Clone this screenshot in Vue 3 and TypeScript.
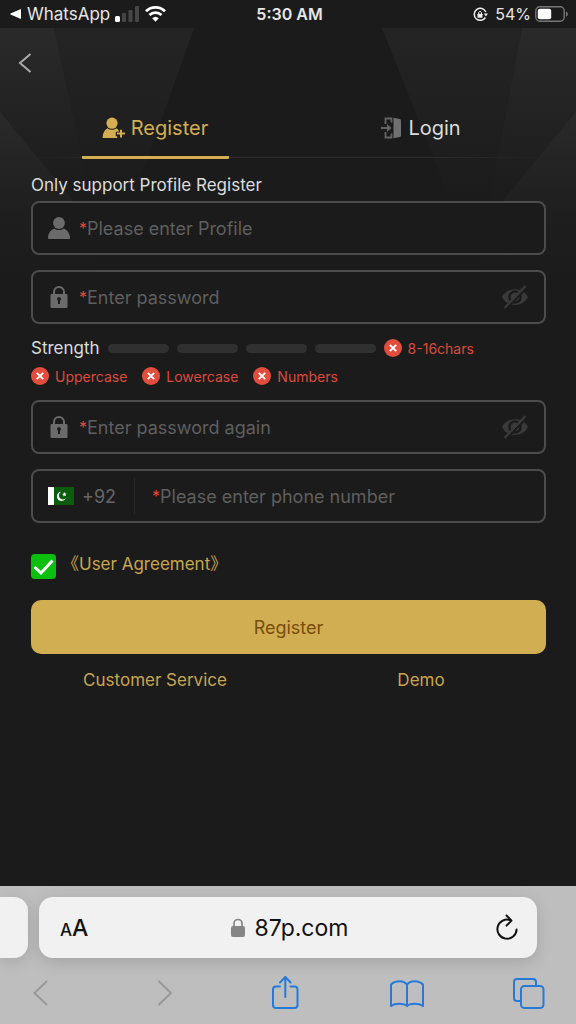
<script setup lang="ts">
import { ref } from 'vue'

interface Rule { id: string; label: string }

const profile = ref('')
const password = ref('')
const passwordAgain = ref('')
const phone = ref('')
const agreed = ref(true)
const showPassword = ref(false)
const showAgain = ref(false)

const lengthRule: Rule = { id: 'length', label: '8-16chars' }
const rules: Rule[] = [
  { id: 'upper', label: 'Uppercase' },
  { id: 'lower', label: 'Lowercase' },
  { id: 'number', label: 'Numbers' },
]
</script>

<template>
  <div class="screen">
    <header class="status">
      <div class="status-left">
        <svg width="12" height="12" viewBox="0 0 12 12"><path d="M11 1v10L.5 6.500v-1z" fill="#fff" /></svg>
        <span class="carrier">WhatsApp</span>
        <svg class="signal" width="25" height="16" viewBox="0 0 25 16">
          <rect x="0" y="10" width="5" height="6" rx="1.500" fill="#fff" />
          <rect x="7" y="7" width="4" height="9" rx="1" fill="#464646" />
          <rect x="13.500" y="4" width="4" height="12" rx="1" fill="#464646" />
          <rect x="20" y="0" width="4" height="16" rx="1" fill="#464646" />
        </svg>
        <svg width="21" height="16" viewBox="0 0 21 16" fill="none" stroke="#fff" stroke-width="2.800">
          <path d="M1 5.300a13.600 13.600 0 0 1 19 0" />
          <path d="M4.500 9a8.600 8.600 0 0 1 12 0" />
          <path d="M10.500 15.800 7.200 12.200a4.800 4.800 0 0 1 6.600 0z" fill="#fff" stroke="none" />
        </svg>
      </div>
      <span class="clock">5:30 AM</span>
      <div class="status-right">
        <svg width="15" height="15" viewBox="0 0 15 15">
          <path d="M12.800 5A6 6 0 1 0 12.400 10.500" fill="none" stroke="#eee" stroke-width="1.500" />
          <path d="M10.800 6.500H15l-2.100 3z" fill="#eee" />
          <rect x="4.500" y="6.700" width="5" height="4" rx=".6" fill="#eee" />
          <path d="M5.600 7V5.600a1.500 1.500 0 0 1 2.900 0V7" fill="none" stroke="#eee" stroke-width="1" />
        </svg>
        <span class="percent">54%</span>
        <svg width="34" height="16" viewBox="0 0 34 16">
          <rect x=".8" y=".8" width="28.400" height="14.400" rx="4" fill="none" stroke="#777" stroke-width="1.400" />
          <rect x="2.800" y="2.800" width="13.400" height="10.400" rx="2" fill="#fff" />
          <path d="M31 5.400c2.400.8 2.400 4.400 0 5.200z" fill="#777" />
        </svg>
      </div>
    </header>

    <main class="page">
      <svg class="backdrop" viewBox="0 0 576 280" preserveAspectRatio="none" aria-hidden="true">
        <defs>
          <linearGradient id="side" x1="0" y1="0" x2="0" y2="1">
            <stop offset="0" stop-color="#2a2a2a" /><stop offset="1" stop-color="#1b1b1b" />
          </linearGradient>
          <linearGradient id="beam" x1="0" y1="0" x2="0" y2="1">
            <stop offset="0" stop-color="#242424" /><stop offset="1" stop-color="#1b1b1b" />
          </linearGradient>
          <linearGradient id="low" x1="0" y1="0" x2="0" y2="1">
            <stop offset="0" stop-color="#2a2a2a" /><stop offset=".6" stop-color="#1e1e1e" /><stop offset="1" stop-color="#1b1b1b" />
          </linearGradient>
        </defs>
        <path d="M54 0h140l-64 180H90z" fill="url(#beam)" />
        <path d="M0 0h54l36 170H0z" fill="url(#side)" />
        <path d="M0 84l96 116v60H0z" fill="url(#low)" />
        <path d="M382 0h140l-34 180h-34z" fill="url(#beam)" />
        <path d="M522 0h54v180h-88z" fill="url(#side)" />
        <path d="M576 84l-96 116v60h96z" fill="url(#low)" />
      </svg>

      <div class="content">
        <nav class="top">
          <button class="back" type="button" aria-label="Back">
            <svg width="14" height="20" viewBox="0 0 14 20" fill="none" stroke="#aaa" stroke-width="2"><path d="M12.500 1 2 10l10.500 9" /></svg>
          </button>
        </nav>

        <div class="tabs">
          <button class="tab active" type="button">
            <svg width="23" height="22" viewBox="0 0 23 22" fill="#d3ae52">
              <circle cx="10" cy="6.200" r="5.600" />
              <path d="M5.500 11.300c2.800 2 6.200 2 9 0 1 .5 1.700 1.200 2.200 2v1.400h-2.900v4.600h1.400V21H1.500C.8 21 .5 20.600.6 20 .9 16 2.500 13 5.500 11.300z" />
              <path d="M18 12.700h2v2.900h3v2h-3v2.900h-2v-2.900h-3v-2h3z" />
            </svg>
            <span>Register</span>
          </button>
          <button class="tab" type="button">
            <svg width="21" height="22" viewBox="0 0 21 22">
              <path d="M10.500 5.500v-4h-6v5.500M4.500 15v5.500h6v-4" fill="none" stroke="#646464" stroke-width="1.800" />
              <path d="M0 10.100h6V7l4.500 4L6 15v-3.100H0z" fill="#646464" />
              <path d="M12.500.8 18.600 2q1.400.3 1.400 1.600v14.800q0 1.300-1.400 1.600l-6.100 1.200z" fill="#707070" />
            </svg>
            <span>Login</span>
          </button>
        </div>

        <form class="form" @submit.prevent>
          <label class="caption" for="profile">Only support Profile Register</label>
          <div class="field">
            <label class="lead" for="profile">
              <svg class="glyph" width="22" height="22" viewBox="0 0 22 22" fill="#6b6b6b">
                <circle cx="11" cy="6" r="5.900" />
                <path d="M6.200 11.500c3 2 6.600 2 9.600 0 3.700 1.500 6.100 5.500 6.200 9 0 1-.4 1.500-1.300 1.500H1.300C.4 22 0 21.500 0 20.500c.1-3.500 2.500-7.500 6.200-9z" />
              </svg>
              <span class="star">*</span>
            </label>
            <input id="profile" v-model="profile" type="text" placeholder="Please enter Profile" />
          </div>

          <div class="field">
            <label class="lead" for="password" aria-label="Password">
              <svg class="glyph" width="22" height="22" viewBox="0 0 22 22">
                <path d="M6 10V6a5 5 0 0 1 10 0v4" fill="none" stroke="#6b6b6b" stroke-width="2" />
                <path fill-rule="evenodd" d="M3.500 8h15q1 0 1 1v12q0 1-1 1h-15q-1 0-1-1V9q0-1 1-1zM11 11a2 2 0 0 0-1 3.700V18h2v-3.300A2 2 0 0 0 11 11z" fill="#6b6b6b" />
              </svg>
              <span class="star">*</span>
            </label>
            <input id="password" v-model="password" :type="showPassword ? 'text' : 'password'" placeholder="Enter password" />
            <button class="eye" type="button" aria-label="Show password" @click="showPassword = !showPassword">
              <svg width="28" height="24" viewBox="0 0 28 24">
                <path d="M1 12C6 1.500 22 1.500 27 12 22 22.500 6 22.500 1 12z" fill="#3a3a3a" />
                <circle cx="14" cy="12" r="5.600" fill="none" stroke="#1b1b1b" stroke-width="2.400" />
                <path d="M5.500 23.500 26 2.500" stroke="#1b1b1b" stroke-width="2.400" />
                <path d="M3.500 23 24.500 1" stroke="#3a3a3a" stroke-width="2.200" />
              </svg>
            </button>
          </div>

          <div class="strength">
            <span class="strength-title">Strength</span>
            <span v-for="n in 4" :key="n" class="bar"></span>
            <span class="rule">
              <svg width="18" height="18" viewBox="0 0 18 18"><circle cx="9" cy="9" r="9" fill="#e34d3e" /><path d="m5.800 5.800 6.400 6.400m0-6.400-6.400 6.400" stroke="#fff" stroke-width="1.900" /></svg>
              {{ lengthRule.label }}
            </span>
          </div>
          <div class="rules">
            <span v-for="rule in rules" :key="rule.id" class="rule">
              <svg width="18" height="18" viewBox="0 0 18 18"><circle cx="9" cy="9" r="9" fill="#e34d3e" /><path d="m5.800 5.800 6.400 6.400m0-6.400-6.400 6.400" stroke="#fff" stroke-width="1.900" /></svg>
              {{ rule.label }}
            </span>
          </div>

          <div class="field">
            <label class="lead" for="again" aria-label="Repeat password">
              <svg class="glyph" width="22" height="22" viewBox="0 0 22 22">
                <path d="M6 10V6a5 5 0 0 1 10 0v4" fill="none" stroke="#6b6b6b" stroke-width="2" />
                <path fill-rule="evenodd" d="M3.500 8h15q1 0 1 1v12q0 1-1 1h-15q-1 0-1-1V9q0-1 1-1zM11 11a2 2 0 0 0-1 3.700V18h2v-3.300A2 2 0 0 0 11 11z" fill="#6b6b6b" />
              </svg>
              <span class="star">*</span>
            </label>
            <input id="again" v-model="passwordAgain" :type="showAgain ? 'text' : 'password'" placeholder="Enter password again" />
            <button class="eye" type="button" aria-label="Show repeated password" @click="showAgain = !showAgain">
              <svg width="28" height="24" viewBox="0 0 28 24">
                <path d="M1 12C6 1.500 22 1.500 27 12 22 22.500 6 22.500 1 12z" fill="#3a3a3a" />
                <circle cx="14" cy="12" r="5.600" fill="none" stroke="#1b1b1b" stroke-width="2.400" />
                <path d="M5.500 23.500 26 2.500" stroke="#1b1b1b" stroke-width="2.400" />
                <path d="M3.500 23 24.500 1" stroke="#3a3a3a" stroke-width="2.200" />
              </svg>
            </button>
          </div>

          <div class="field">
            <button class="country" type="button">
              <svg width="26" height="18" viewBox="0 0 26 18">
                <rect width="26" height="18" fill="#0b5c0d" />
                <rect width="6" height="18" fill="#fff" />
                <path d="M13.300 4.800a4.600 4.600 0 1 0 4.600 6.300 4 4 0 1 1-4.600-6.300z" fill="#fff" />
                <path d="m16.300 5 .7 1.400 1.500-.1-1 1.200.6 1.400-1.500-.5-1.200 1 .1-1.500-1.300-.8 1.500-.5z" fill="#fff" />
              </svg>
              <span>+92</span>
            </button>
            <label class="star" for="phone" aria-label="Phone number">*</label>
            <input id="phone" v-model="phone" type="tel" placeholder="Please enter phone number" />
          </div>

          <div class="agreement">
            <input id="agree" v-model="agreed" class="tick" type="checkbox" aria-label="Agree" />
            <label for="agree" class="agree-label"><a href="#agreement">《User Agreement》</a></label>
          </div>

          <button class="submit" type="submit">Register</button>
        </form>

        <div class="links">
          <a href="#service">Customer Service</a>
          <a href="#demo">Demo</a>
        </div>
      </div>
    </main>

    <footer class="browser">
      <div class="address-row">
        <div class="neighbour"></div>
        <div class="address">
          <button class="aa" type="button" aria-label="Page settings"><span class="aa-small">A</span><span class="aa-big">A</span></button>
          <div class="url">
            <svg width="14" height="20" viewBox="0 0 14 20">
              <rect x="0" y="8" width="14" height="11" rx="2" fill="#858585" />
              <path d="M3 9V5.500a4 4 0 0 1 8 0V9" fill="none" stroke="#858585" stroke-width="1.700" />
            </svg>
            <span>87p.com</span>
          </div>
          <button class="reload" type="button" aria-label="Reload">
            <svg width="24" height="28" viewBox="0 0 24 28" fill="none" stroke="#111" stroke-width="2" stroke-linecap="round" stroke-linejoin="round">
              <path d="M15.500 6.200A9.600 9.600 0 1 0 21.600 15.500" /><path d="m11.500 1.500 5 5.100-5 5" />
            </svg>
          </button>
        </div>
      </div>
      <nav class="tools">
        <button type="button" aria-label="Previous page"><svg width="36" height="36" viewBox="0 0 36 36" fill="none" stroke="#999" stroke-width="2"><path d="M25 6 12.500 18 25 30" /></svg></button>
        <button type="button" aria-label="Next page"><svg width="36" height="36" viewBox="0 0 36 36" fill="none" stroke="#999" stroke-width="2"><path d="m14.500 6 12.500 12L14.500 30" /></svg></button>
        <button type="button" aria-label="Share"><svg width="36" height="36" viewBox="0 0 36 36" fill="none" stroke="#267bd8" stroke-width="2" stroke-linecap="round" stroke-linejoin="round"><path d="M14 11.500h-4q-3 0-3 3V30q0 3 3 3h18.500q3 0 3-3V14.500q0-3-3-3h-4M19.300 22V2M14 7.500 19.300 2l5.300 5.500" /></svg></button>
        <button type="button" aria-label="Bookmarks"><svg width="36" height="36" viewBox="0 0 36 36" fill="none" stroke="#267bd8" stroke-width="2" stroke-linejoin="round"><path d="M19 9.500c-3-4.500-12-4.500-16 0v21.500c4-3 13-3 16 0zM19 9.500c3-4.500 12-4.500 16 0v21.500c-4-3-13-3-16 0z" /></svg></button>
        <button type="button" aria-label="Tabs"><svg width="36" height="36" viewBox="0 0 36 36" fill="none" stroke="#267bd8" stroke-width="2"><path d="M11 26H7q-3 0-3-3V7q0-3 3-3h16q3 0 3 3v3.500" /><rect x="11" y="11" width="22.500" height="22" rx="3.500" /></svg></button>
      </nav>
    </footer>
  </div>
</template>

<style>
body { margin: 0; background: #1b1b1b; }
</style>

<style scoped>
.screen {
  display: flex;
  flex-direction: column;
  min-height: 100vh;
  background: #1b1b1b;
  color: #dcdcdc;
  font-family: Inter, "Liberation Sans", "Noto Sans CJK SC", sans-serif;
  font-size: 17px;
}
button {
  border: 0;
  padding: 0;
  background: none;
  color: inherit;
  font: inherit;
  cursor: pointer;
}
svg { display: block; flex: none; }
a { text-decoration: none; color: inherit; }

.status {
  display: grid;
  grid-template-columns: 1fr auto 1fr;
  align-items: center;
  height: 28px;
  padding: 0 7px 0 10px;
  color: #e6e6e6;
}
.status-left, .status-right { display: flex; align-items: center; }
.status-right { justify-content: flex-end; }
.carrier { margin: 0 5px; }
.signal { margin-right: 5px; }
.clock { font-size: 16px; font-weight: 600; }
.percent { margin: 0 4px 0 7px; font-size: 16px; }

.page { position: relative; flex: 1; }
.backdrop { position: absolute; top: 0; left: 0; width: 100%; height: 280px; }
.content { position: relative; }

.top { padding: 25px 18px 0; }
.back { display: block; }
.tabs {
  display: grid;
  grid-template-columns: 1fr 1fr;
  margin: 26px 22px 0;
  background: linear-gradient(90deg, transparent, #2b2b2b 20%, #2b2b2b 80%, transparent) bottom 1px left 0 / 100% 1px no-repeat;
}
.tab {
  display: flex;
  justify-content: center;
  justify-self: center;
  align-items: center;
  gap: 6px;
  width: 147px;
  height: 60px;
  border-bottom: 3px solid transparent;
  font-size: 20px;
}
.tab.active { border-bottom-color: #d3ae52; border-radius: 1px; color: #d3ae52; }

.form { display: flex; flex-direction: column; padding: 0 30px 0 31px; }
.caption { margin: 12px 0 2px; line-height: 28px; }
.field {
  display: flex;
  align-items: center;
  box-sizing: border-box;
  height: 54px;
  padding: 0 15px;
  border: 2px solid #4c4c4c;
  border-radius: 8px;
  background: #1b1b1b;
}
.field + .field { margin-top: 15px; }
.lead { display: flex; align-items: center; }
.glyph { margin-right: 9px; }
.star { color: #e04a3c; font-size: 16px; }
.field input {
  flex: 1;
  min-width: 0;
  padding: 0;
  border: 0;
  outline: 0;
  background: none;
  color: #dcdcdc;
  font: inherit;
  font-size: 18px;
}
.field input::placeholder { color: #5f5f5f; opacity: 1; }
.country {
  display: flex;
  align-items: center;
  gap: 8px;
  height: 36px;
  margin-right: 17px;
  padding-right: 18px;
  border-right: 1px solid #292929;
  color: #666;
  font-size: 18px;
}

.strength, .rules { display: flex; align-items: center; height: 28px; }
.strength { gap: 8px; margin-top: 10px; }
.rules { gap: 15px; margin-bottom: 10px; }
.bar { flex: 0 1 61px; height: 9px; border-radius: 5px; background: #303030; }
.rule {
  display: flex;
  align-items: center;
  gap: 6px;
  color: #dc4b3e;
  font-size: 14px;
  white-space: nowrap;
}

.agreement { display: flex; gap: 6px; height: 24px; margin-top: 31px; color: #c8a54f; }
.agree-label { line-height: 20px; }
.tick {
  appearance: none;
  width: 25px;
  height: 25px;
  margin: 0;
  border-radius: 4px;
  background: #383838;
}
.tick:checked {
  background: #0abf0d url("data:image/svg+xml,%3Csvg xmlns='http://www.w3.org/2000/svg' viewBox='0 0 25 25'%3E%3Cpath d='M3.500 13 10 19 21.500 6.500' fill='none' stroke='white' stroke-width='3'/%3E%3C/svg%3E") center / 100% no-repeat;
}
.submit {
  height: 54px;
  margin-top: 22px;
  border-radius: 10px;
  background: #d2ae53;
  color: #784d0c;
  font-size: 18px;
}
.links {
  display: grid;
  grid-template-columns: 1fr 1fr;
  margin: 14px 22px 24px;
  color: #c8a54f;
  line-height: 24px;
  text-align: center;
}

.browser {
  height: 138px;
  overflow: hidden;
  background: #bebebe;
  color: #111;
}
.address-row { display: flex; gap: 11px; padding: 11px 39px 0 0; }
.neighbour {
  width: 28px;
  border-radius: 0 14px 14px 0;
  background: #f1f1f1;
  box-shadow: 0 4px 16px rgba(0, 0, 0, 0.12);
}
.address {
  display: grid;
  grid-template-columns: 1fr auto 1fr;
  align-items: center;
  flex: 1;
  height: 61px;
  padding: 0 18px 0 21px;
  border-radius: 14px;
  background: #f1f1f1;
  box-shadow: 0 4px 16px rgba(0, 0, 0, 0.14);
}
.aa { display: flex; align-items: baseline; justify-self: start; font-weight: 500; }
.aa-small { font-size: 17px; }
.aa-big { font-size: 23px; }
.url { display: flex; align-items: center; gap: 10px; font-size: 23px; }
.reload { justify-self: end; }
.tools { display: flex; justify-content: space-between; padding: 17px 30px 0 22px; }
</style>
